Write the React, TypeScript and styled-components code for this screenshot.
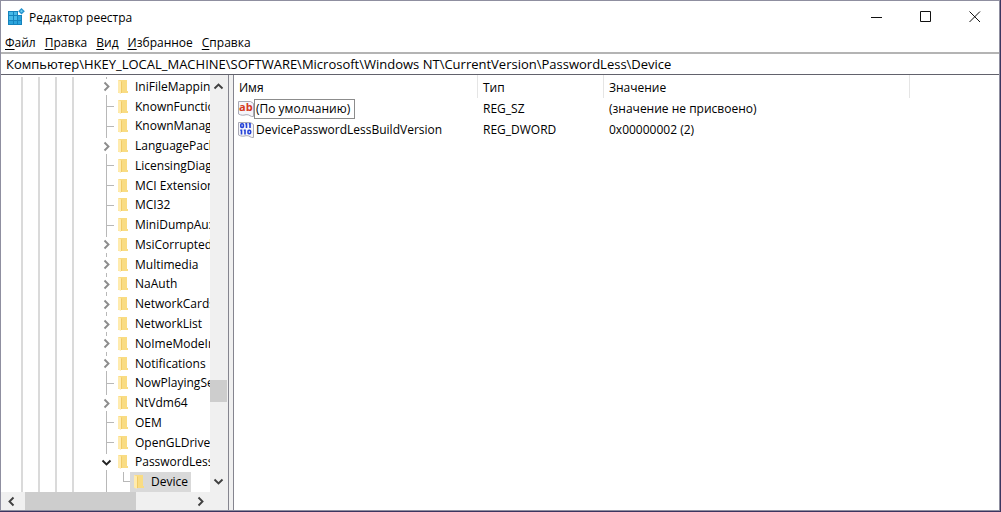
import React, { useState } from 'react';
import styled, { createGlobalStyle, css } from 'styled-components';

const GlobalStyle = createGlobalStyle`
  *, *::before, *::after { box-sizing: border-box; }
  body {
    margin: 0;
    color: #000;
    background: #4b4458;
    font: 12px/18px "Open Sans", "Noto Sans", sans-serif;
  }
  button, input { font: inherit; color: inherit; }
`;

const Desktop = styled.div`
  display: flex;
  height: 100vh;
  padding: 0 1px 1px 0;
  background: #3b3560;
`;

const Window = styled.div`
  display: flex;
  flex-direction: column;
  flex: 1;
  min-width: 0;
  background: #fff;
  border: 1px solid #8f8fa0;
`;

const TitleBar = styled.header`
  display: flex;
  align-items: center;
  height: 31px;
  padding-left: 6px;
`;

const Title = styled.h1`
  flex: 1;
  margin: 0 0 0 4px;
  padding-top: 2px;
  font-size: 12px;
  font-weight: 400;
  white-space: nowrap;
`;

const CaptionButton = styled.button`
  display: grid;
  place-items: center;
  width: 49px;
  height: 30px;
  padding: 0;
  border: 0;
  background: none;
`;

const MenuBar = styled.nav`
  display: flex;
  align-items: center;
  gap: 9px;
  height: 20px;
  padding: 2px 0 0 4px;
`;

const MenuItem = styled.button`
  padding: 0;
  border: 0;
  background: none;
  u { text-underline-offset: 2px; }
`;

const AddressBar = styled.label`
  display: flex;
  height: 23px;
  border-top: 2px solid #b4b4b4;
  border-bottom: 1px solid #62626c;
`;

const AddressInput = styled.input`
  flex: 1;
  min-width: 0;
  padding: 0 5px;
  border: 0;
  outline: 0;
  background: #fff;
  font-size: 13px;
`;

const Panes = styled.main`
  display: grid;
  grid-template-columns: 228px 1fr;
  gap: 4px;
  flex: 1;
  min-height: 0;
  background: #f0f0f0;
`;

const TreePane = styled.section`
  display: grid;
  grid-template-columns: 1fr 17px;
  grid-template-rows: 1fr 18px;
  min-height: 0;
  padding-right: 1px;
  background: #f0f0f0;
  border-right: 1px solid #85858f;
`;

const Tree = styled.ul`
  display: grid;
  grid-auto-rows: 1fr;
  min-height: 0;
  margin: 0;
  padding: 2px 0 0 20px;
  overflow: hidden;
  list-style: none;
  background: #fff;
`;

const TreeRow = styled.li`
  display: flex;
  align-items: stretch;
  min-width: 0;
  min-height: 0;
  white-space: nowrap;
`;

const Guide = styled.span`
  flex: none;
  width: 17px;
  border-left: 2px solid #dadada;
`;

const Stem = styled.span<{ $branch?: boolean }>`
  display: flex;
  align-items: center;
  flex: none;
  width: 12px;
  margin-left: 17px;
  border-left: 1px solid #b8b8b8;
  ${({ $branch }) => $branch && css`
    &::before {
      content: "";
      width: 7px;
      border-top: 1px solid #b8b8b8;
    }
  `}
`;

const Elbow = styled.span`
  flex: none;
  width: 7px;
  height: 50%;
  margin-left: 5px;
  border: solid #b8b8b8;
  border-width: 0 0 1px 1px;
`;

const Toggle = styled.button`
  display: flex;
  align-items: center;
  flex: none;
  width: 29px;
  padding: 0 0 0 12px;
  border: 0;
  background:
    linear-gradient(#b8b8b8, #b8b8b8) 17px 0 / 1px 2px no-repeat,
    linear-gradient(#b8b8b8, #b8b8b8) 17px 100% / 1px 2px no-repeat;
`;

const Entry = styled.span<{ $selected?: boolean }>`
  display: flex;
  align-items: center;
  gap: 7px;
  ${({ $selected }) => $selected && css`
    padding: 0 3px 0 4px;
    background: #d9d9d9;
  `}
`;

const ScrollTrack = styled.div<{ $horizontal?: boolean }>`
  display: flex;
  flex-direction: ${({ $horizontal }) => ($horizontal ? 'row' : 'column')};
  gap: ${({ $horizontal }) => ($horizontal ? '4px' : '0')};
  background: #f0f0f0;
`;

const ScrollButton = styled.button<{ $horizontal?: boolean }>`
  display: grid;
  place-items: center;
  flex: none;
  width: ${({ $horizontal }) => ($horizontal ? '20px' : '17px')};
  height: ${({ $horizontal }) => ($horizontal ? '18px' : '22px')};
  padding: 0;
  border: 0;
  background: none;
`;

const Thumb = styled.div<{ $length: number; $horizontal?: boolean }>`
  flex: none;
  background: #cdcdcd;
  ${({ $length, $horizontal }) => ($horizontal
    ? css`width: ${$length}px;`
    : css`height: ${$length}px;`)}
`;

const Spacer = styled.div<{ $grow: number }>`
  flex: ${({ $grow }) => $grow} 1 0;
`;

const ListPane = styled.section`
  min-width: 0;
  overflow: hidden;
  background: #fff;
  border-left: 1px solid #85858f;
`;

const ValueTable = styled.table`
  width: 100%;
  table-layout: fixed;
  border-collapse: separate;
  border-spacing: 0;
  white-space: nowrap;
`;

const HeadCell = styled.th`
  height: 23px;
  padding: 2px 0 0 5px;
  border-right: 1px solid #e5e5e5;
  font-weight: 400;
  text-align: left;
  &:last-child { border-right: 0; }
`;

const Cell = styled.td`
  height: 21px;
  padding: 0 0 0 5px;
`;

const NameCell = styled(Cell)`
  padding-left: 4px;
`;

const NameBox = styled.div`
  display: flex;
  align-items: center;
`;

const ValueName = styled.span<{ $focused?: boolean }>`
  padding: 0 4px 0 1px;
  border: 1px solid ${({ $focused }) => ($focused ? '#8c8c8c' : 'transparent')};
`;

const RegistryIcon = () => (
  <svg width="18" height="18" viewBox="0 0 18 18" aria-hidden="true">
    <path d="M1 3h10v4h4v10H1z" fill="#1583bd" />
    <path d="M2 4h4v3H2zM7 4h3v3H7zM2 8h4v4H2zM7 8h3v4H7z" fill="#45b9e8" />
    <path d="M11 8h3v4h-3zM2 13h4v3H2zM7 13h3v3H7zM11 13h3v3h-3z" fill="#2ba4dc" />
    <path d="M14.500 0L17.800 3.200 14.500 6.400 11.200 3.200z" fill="#2593ce" />
    <path d="M14.500 1.800l1.400 1.400-1.400 1.400-1.400-1.400z" fill="#6fcff2" />
  </svg>
);

const FolderIcon = () => (
  <svg width="10" height="14" viewBox="0 0 10 14" aria-hidden="true">
    <path d="M0 0h9v11h1v2H0z" fill="#f9dc83" />
    <path d="M0 0l3 1.500V14L0 12.500z" fill="#ffebae" />
    <path d="M3.500 1.500V13" stroke="#efc75f" strokeWidth=".8" fill="none" />
  </svg>
);

const Page = () => (
  <path d="M.5 1.500h12l3 2v13c-3 .8-4-2.500-7.500-1.800-3 .8-4.500.8-7.500-.7z" fill="#f5f5fa" stroke="#a9a9b5" />
);

const glyph = { fontFamily: '"Open Sans", sans-serif', fontWeight: 700 };

const StringIcon = () => (
  <svg width="16" height="18" viewBox="0 0 16 18" aria-hidden="true">
    <Page />
    <text x="1" y="11" fontSize="11" fill="#d5391d" {...glyph}>ab</text>
  </svg>
);

const BinaryIcon = () => (
  <svg width="16" height="18" viewBox="0 0 16 18" aria-hidden="true">
    <Page />
    <g fill="none" stroke="#2442d8" strokeWidth="1.600">
      <rect x="2.800" y="2.800" width="2.600" height="3.600" rx="1" />
      <path d="M8.500 2v5M7.300 2.800h1M12 2v5M10.800 2.800h1M3.500 8.500v5M2.300 9.300h1M7 8.500v5M5.800 9.300h1" />
      <rect x="10" y="9.300" width="2.600" height="3.400" rx="1" />
    </g>
  </svg>
);

type Direction = 'left' | 'right' | 'up' | 'down';
const turns: Record<Direction, number> = { right: 0, down: 90, left: 180, up: 270 };

const Chevron = ({ to, color = '#404040' }: { to: Direction; color?: string }) => (
  <svg width="11" height="11" viewBox="0 0 11 11" aria-hidden="true">
    <path d="M3.500 1.500l4 4-4 4" transform={`rotate(${turns[to]} 5.5 5.5)`} fill="none" stroke={color} strokeWidth="1.900" />
  </svg>
);

const menus = ['Файл', 'Правка', 'Вид', 'Избранное', 'Справка'];

type Key = { name: string; state?: 'closed' | 'open' };
const keys: Key[] = [
  { name: 'IniFileMapping', state: 'closed' },
  { name: 'KnownFunctionTableDlls' },
  { name: 'KnownManagedDebuggingDlls' },
  { name: 'LanguagePack', state: 'closed' },
  { name: 'LicensingDiag' },
  { name: 'MCI Extensions' },
  { name: 'MCI32' },
  { name: 'MiniDumpAuxiliaryDlls' },
  { name: 'MsiCorruptedFileRecovery', state: 'closed' },
  { name: 'Multimedia', state: 'closed' },
  { name: 'NaAuth', state: 'closed' },
  { name: 'NetworkCards', state: 'closed' },
  { name: 'NetworkList', state: 'closed' },
  { name: 'NoImeModeImes', state: 'closed' },
  { name: 'Notifications', state: 'closed' },
  { name: 'NowPlayingSessionManager' },
  { name: 'NtVdm64', state: 'closed' },
  { name: 'OEM' },
  { name: 'OpenGLDrivers' },
  { name: 'PasswordLess', state: 'open' },
];

const values = [
  { name: '(По умолчанию)', type: 'REG_SZ', data: '(значение не присвоено)', icon: <StringIcon /> },
  { name: 'DevicePasswordLessBuildVersion', type: 'REG_DWORD', data: '0x00000002 (2)', icon: <BinaryIcon /> },
];

const Guides = () => (<><Guide /><Guide /><Guide /><Guide /></>);

export default function App() {
  const [path, setPath] = useState(
    'Компьютер\\HKEY_LOCAL_MACHINE\\SOFTWARE\\Microsoft\\Windows NT\\CurrentVersion\\PasswordLess\\Device',
  );

  return (
    <Desktop>
      <GlobalStyle />
      <Window>
        <TitleBar>
          <RegistryIcon />
          <Title>Редактор реестра</Title>
          <CaptionButton aria-label="Свернуть">
            <svg width="12" height="12"><path d="M0 6.500h11" stroke="#111" /></svg>
          </CaptionButton>
          <CaptionButton aria-label="Развернуть">
            <svg width="12" height="12"><path d="M.5.5h10v10H.5z" fill="none" stroke="#111" /></svg>
          </CaptionButton>
          <CaptionButton aria-label="Закрыть">
            <svg width="12" height="12"><path d="M.5.5l10.500 10.500M11 .5L.5 11" stroke="#111" /></svg>
          </CaptionButton>
        </TitleBar>
        <MenuBar>
          {menus.map((m) => (
            <MenuItem key={m}><u>{m[0]}</u>{m.slice(1)}</MenuItem>
          ))}
        </MenuBar>
        <AddressBar>
          <AddressInput aria-label="Адрес" value={path} onChange={(e) => setPath(e.target.value)} />
        </AddressBar>
        <Panes>
          <TreePane>
            <Tree>
              {keys.map(({ name, state }) => (
                <TreeRow key={name}>
                  <Guides />
                  {state ? (
                    <Toggle aria-label={name} aria-expanded={state === 'open'}>
                      <Chevron to={state === 'open' ? 'down' : 'right'} color={state === 'open' ? '#222' : '#8c8c8c'} />
                    </Toggle>
                  ) : <Stem $branch />}
                  <Entry><FolderIcon />{name}</Entry>
                </TreeRow>
              ))}
              <TreeRow>
                <Guides />
                <Stem />
                <Elbow />
                <Entry $selected><FolderIcon />Device</Entry>
              </TreeRow>
            </Tree>
            <ScrollTrack>
              <ScrollButton aria-label="Вверх"><Chevron to="up" /></ScrollButton>
              <Spacer $grow={283} />
              <Thumb $length={22} />
              <Spacer $grow={68} />
              <ScrollButton aria-label="Вниз"><Chevron to="down" /></ScrollButton>
            </ScrollTrack>
            <ScrollTrack $horizontal>
              <ScrollButton $horizontal aria-label="Влево"><Chevron to="left" /></ScrollButton>
              <Thumb $horizontal $length={111} />
              <Spacer $grow={1} />
              <ScrollButton $horizontal aria-label="Вправо"><Chevron to="right" /></ScrollButton>
            </ScrollTrack>
          </TreePane>
          <ListPane>
            <ValueTable>
              <colgroup>
                <col width="244" />
                <col width="126" />
                <col width="306" />
                <col />
              </colgroup>
              <thead>
                <tr>
                  <HeadCell scope="col">Имя</HeadCell>
                  <HeadCell scope="col">Тип</HeadCell>
                  <HeadCell scope="col">Значение</HeadCell>
                  <HeadCell as="td" />
                </tr>
              </thead>
              <tbody>
                {values.map((v, i) => (
                  <tr key={v.name}>
                    <NameCell>
                      <NameBox>{v.icon}<ValueName $focused={i === 0}>{v.name}</ValueName></NameBox>
                    </NameCell>
                    <Cell>{v.type}</Cell>
                    <Cell>{v.data}</Cell>
                    <Cell />
                  </tr>
                ))}
              </tbody>
            </ValueTable>
          </ListPane>
        </Panes>
      </Window>
    </Desktop>
  );
}
